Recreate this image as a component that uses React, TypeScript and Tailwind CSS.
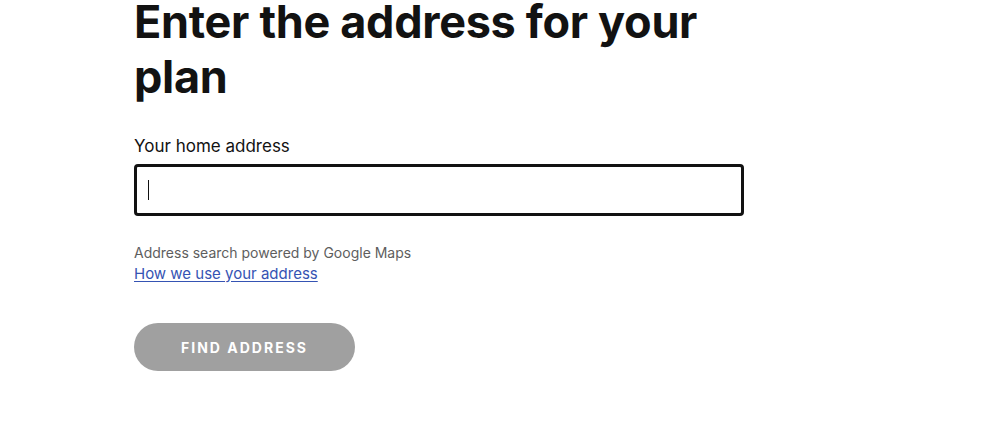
export default function App() {
  return (
    <div className="min-h-[444px] w-full bg-white font-['Inter',sans-serif] text-[#121212]">
      <div className="pl-[134px] w-[744px]">
        <h1 className="-mt-[6px] text-[45px] font-bold leading-[55px] tracking-[-0.3px]">
          Enter the address for your plan
        </h1>

        <label className="mt-[30px] block text-[17px] leading-[24px]">Your home address</label>
        <div className="mt-[6px] flex h-[52px] w-[610px] items-center rounded-[4px] border-[3px] border-[#121212] px-[11px]">
          <span className="block h-[20px] w-px bg-[#121212]" />
        </div>

        <p className="mt-[27px] text-[14px] leading-[20px] text-[#5e5e5e]">
          Address search powered by Google Maps
        </p>
        <a href="#" className="block text-[15px] leading-[22px] text-[#3553b3] underline underline-offset-2">
          How we use your address
        </a>

        <button className="mt-[38px] h-[48px] w-[221px] rounded-full bg-[#a0a0a0] text-[14px] font-bold uppercase tracking-[2px] text-white">
          Find address
        </button>
      </div>
    </div>
  );
}
